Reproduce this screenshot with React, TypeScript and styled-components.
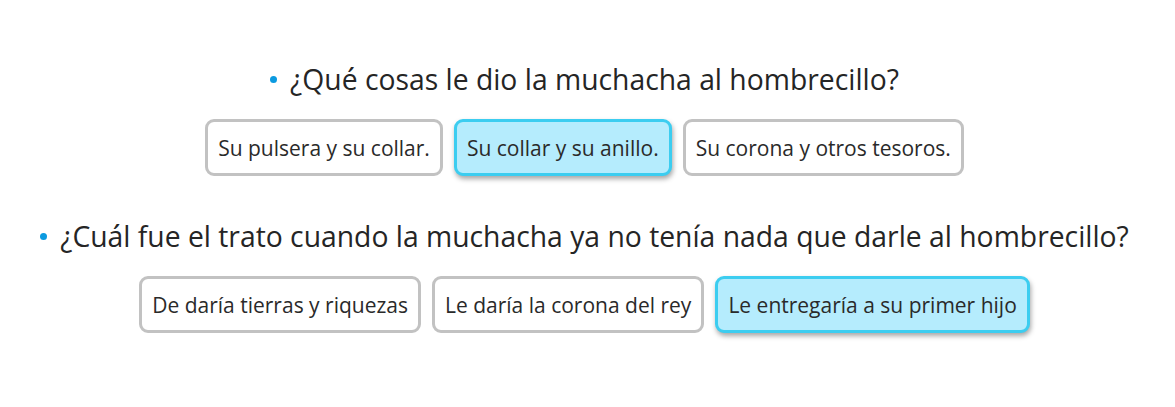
import React from "react";
import styled, { createGlobalStyle } from "styled-components";

const Global = createGlobalStyle`
  html, body { margin: 0; padding: 0; background: #ffffff; }
  body { font-family: "Open Sans", "Noto Sans", sans-serif; color: #222; }
`;

const Page = styled.div`
  display: flex;
  flex-direction: column;
  align-items: center;
  padding-top: 59px;
  padding-right: 6px;
`;

const Block = styled.section`
  display: flex;
  flex-direction: column;
  align-items: center;
  margin-bottom: 40px;
`;

const Question = styled.h2`
  margin: 0;
  display: flex;
  align-items: center;
  gap: 13px;
  font-size: 28.3px;
  font-weight: 400;
  line-height: 40px;
  color: #252525;
`;

const Dot = styled.span`
  width: 7px;
  height: 7px;
  border-radius: 50%;
  background: #0b9ae0;
  flex: none;
`;

const Options = styled.div`
  display: flex;
  gap: 11px;
  margin-top: 20px;
`;

const Option = styled.button<{ $selected?: boolean }>`
  font-family: inherit;
  font-size: 21px;
  color: #2a2a2a;
  height: 57px;
  padding: 0 10px;
  border-radius: 9px;
  border: 3px solid ${(p) => (p.$selected ? "#3ccdf0" : "#c2c2c2")};
  background: ${(p) => (p.$selected ? "#b5ecfd" : "#ffffff")};
  box-shadow: ${(p) => (p.$selected ? "1px 3px 5px rgba(0,0,0,0.35)" : "none")};
  cursor: pointer;
`;

const data = [
  {
    q: "¿Qué cosas le dio la muchacha al hombrecillo?",
    options: ["Su pulsera y su collar.", "Su collar y su anillo.", "Su corona y otros tesoros."],
    selected: 1,
  },
  {
    q: "¿Cuál fue el trato cuando la muchacha ya no tenía nada que darle al hombrecillo?",
    options: ["De daría tierras y riquezas", "Le daría la corona del rey", "Le entregaría a su primer hijo"],
    selected: 2,
  },
];

export default function App() {
  return (
    <>
      <Global />
      <Page>
        {data.map((b) => (
          <Block key={b.q}>
            <Question>
              <Dot />
              {b.q}
            </Question>
            <Options>
              {b.options.map((o, i) => (
                <Option key={o} $selected={i === b.selected}>
                  {o}
                </Option>
              ))}
            </Options>
          </Block>
        ))}
      </Page>
    </>
  );
}
